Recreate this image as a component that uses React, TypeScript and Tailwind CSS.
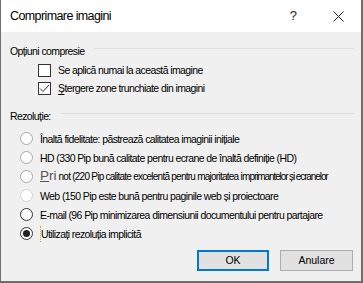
import React from 'react';

const FONT = { fontFamily: '"Liberation Sans", Arial, sans-serif' };

const TEXT = 'text-[10.5px] tracking-[-0.6px] leading-[16px] text-black whitespace-nowrap';

function GroupHeader({ label, className = '' }: { label: string; className?: string }) {
  return (
    <div className={`flex items-center h-[16px] pr-[7px] ${className}`}>
      <span className={TEXT}>{label}</span>
      <div className="flex-1 h-px bg-[#dcdcdc] ml-[10px] -mt-[5px]" />
    </div>
  );
}

function Checkbox({ checked, children }: { checked?: boolean; children: React.ReactNode }) {
  return (
    <div className="flex items-center h-[18px] pl-[28px]">
      <div className="shrink-0 w-[13px] h-[13px] border border-[#333] bg-white flex items-center justify-center">
        {checked && (
          <svg width="11" height="11" viewBox="0 0 11 11">
            <path d="M1 5.5 L4 8.5 L10 2" fill="none" stroke="#333" strokeWidth="1" />
          </svg>
        )}
      </div>
      <span className={`ml-[7px] ${TEXT}`}>{children}</span>
    </div>
  );
}

function Radio({
  tone,
  selected,
  focused,
  children,
}: {
  tone: 'gray' | 'light' | 'dark';
  selected?: boolean;
  focused?: boolean;
  children: React.ReactNode;
}) {
  const border =
    tone === 'dark' ? 'border-[#333]' : tone === 'light' ? 'border-[#d4d4d4]' : 'border-[#a8a8a8]';
  return (
    <div className="flex items-center h-[19px] pl-[10px]">
      <div
        className={`shrink-0 w-[13px] h-[13px] rounded-full border ${border} bg-white flex items-center justify-center`}
      >
        {selected && <div className="w-[7px] h-[7px] rounded-full bg-[#222]" />}
      </div>
      <span className={`ml-[7px] ${TEXT} ${focused ? 'border-l border-dotted border-[#d8b000]' : ''}`}>
        {children}
      </span>
    </div>
  );
}

export default function App() {
  return (
    <div
      style={FONT}
      className="w-[363px] h-[283px] flex flex-col bg-[#f0f0f0] border-l border-r-2 border-b-2 border-[#6e6e6e]"
    >
      <div className="h-[32px] bg-white flex items-center pl-[9px] pr-[17px] shrink-0">
        <span className="text-[12.5px] tracking-[-0.6px] leading-[20px] text-black">Comprimare imagini</span>
        <span className="ml-auto text-[13px] text-[#222] mr-[36px]">?</span>
        <svg width="11" height="11" viewBox="0 0 11 11">
          <path d="M0.5 0.5 L10.5 10.5 M10.5 0.5 L0.5 10.5" stroke="#222" strokeWidth="1" />
        </svg>
      </div>

      <div className="flex-1 flex flex-col pl-[9px]">
        <GroupHeader label="Opțiuni compresie" className="mt-[11px]" />
        <div className="mt-[2px]">
          <Checkbox>Se aplică numai la această imagine</Checkbox>
          <Checkbox checked>
            <span className="underline underline-offset-2">Ș</span>tergere zone trunchiate din imagini
          </Checkbox>
        </div>

        <GroupHeader label="Rezoluție:" className="mt-[11px]" />
        <div className="mt-[5px]">
          <Radio tone="gray">Înaltă fidelitate: păstrează calitatea imaginii inițiale</Radio>
          <Radio tone="gray">HD (330 Pip bună calitate pentru ecrane de înaltă definiție (HD)</Radio>
          <Radio tone="gray">
            <span className="text-[13.5px] tracking-normal text-[#555]">
              <span className="underline">P</span>ri
            </span>
            <span className="text-[10px] tracking-[-0.75px]"> not (220 Pip calitate excelentă pentru majoritatea im</span>
            <span className="text-[10px] tracking-[-1.1px]">primantelor și ecranelor</span>
          </Radio>
          <Radio tone="light">Web (150 Pip este bună pentru paginile web și proiectoare</Radio>
          <Radio tone="dark">E-mail (96 Pip minimizarea dimensiunii documentului pentru partajare</Radio>
          <Radio tone="dark" selected focused>
            Utilizați rezoluția implicită
          </Radio>
        </div>

        <div className="flex justify-end gap-[11px] mt-[7px] pr-[8px]">
          <button className="w-[72px] h-[21px] bg-[#e1e1e1] border-2 border-[#0078d7] text-[10.5px] text-black">
            OK
          </button>
          <button className="w-[73px] h-[21px] bg-[#e1e1e1] border border-[#adadad] text-[10.5px] text-black">
            Anulare
          </button>
        </div>
      </div>
    </div>
  );
}
